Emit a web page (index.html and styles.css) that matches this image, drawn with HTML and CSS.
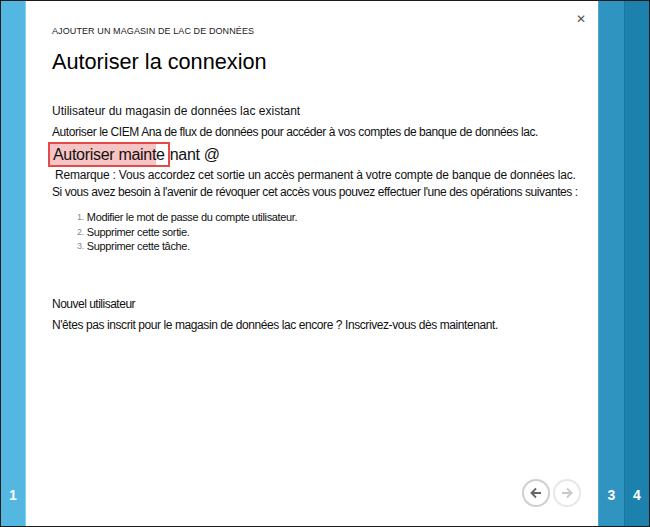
FILE: index.html
```html
<!DOCTYPE html>
<html lang="fr">
<head>
<meta charset="utf-8">
<title>Autoriser la connexion</title>
<link rel="stylesheet" href="styles.css">
</head>
<body>
<div class="frame">
  <div class="step step-1"><span class="step-num">1</span></div>
  <div class="main">
    <button class="close" aria-label="Fermer">&#x2715;</button>
    <div class="content">
      <div class="eyebrow">AJOUTER UN MAGASIN DE LAC DE DONNÉES</div>
      <h1 class="title">Autoriser la connexion</h1>
      <div class="section-head">Utilisateur du magasin de données lac existant</div>
      <p class="line tight">Autoriser le CIEM Ana de flux de données pour accéder à vos comptes de banque de données lac.</p>
      <div class="auth-row"><span class="auth-box"><span class="auth-fill"></span><span class="auth-text">Autoriser mainte</span></span><span class="auth-rest">nant @</span></div>
      <p class="line note">Remarque : Vous accordez cet sortie un accès permanent à votre compte de banque de données lac.</p>
      <p class="line tight after-note">Si vous avez besoin à l'avenir de révoquer cet accès vous pouvez effectuer l'une des opérations suivantes :</p>
      <ol class="ops">
        <li><span class="num">1.</span><span>Modifier le mot de passe du compte utilisateur.</span></li>
        <li><span class="num">2.</span><span>Supprimer cette sortie.</span></li>
        <li><span class="num">3.</span><span>Supprimer cette tâche.</span></li>
      </ol>
      <div class="section-head new">Nouvel utilisateur</div>
      <p class="line tight">N'êtes pas inscrit pour le magasin de données lac encore ? Inscrivez-vous dès maintenant.</p>
    </div>
    <div class="nav">
      <span class="circle back"><svg width="14" height="14" viewBox="0 0 14 14"><path d="M12 7H3M7 2.5L2.5 7 7 11.5" fill="none" stroke="#666" stroke-width="1.8"/></svg></span>
      <span class="circle fwd"><svg width="14" height="14" viewBox="0 0 14 14"><path d="M2 7h9M7 2.5L11.5 7 7 11.5" fill="none" stroke="#c8c8c8" stroke-width="1.8"/></svg></span>
    </div>
  </div>
  <div class="step step-3"><span class="step-num">3</span></div>
  <div class="step step-4"><span class="step-num">4</span></div>
</div>
</body>
</html>
```

FILE: styles.css
```css
html, body {
  margin: 0;
  padding: 0;
  background: #fff;
}
.frame {
  box-sizing: border-box;
  width: 650px;
  height: 527px;
  border: 1px solid #1b1b1b;
  display: flex;
  font-family: "Liberation Sans", Arial, sans-serif;
  color: #111;
}
.step {
  display: flex;
  align-items: flex-end;
  justify-content: center;
  padding-bottom: 23px;
  box-sizing: border-box;
}
.step-num {
  color: #fff;
  font-weight: bold;
  font-size: 14px;
  line-height: 16px;
}
.step-1 {
  width: 25px;
  background: #53b7e2;
  border-right: 1px solid #7fd2f2;
}
.step-3 {
  width: 26px;
  background: #3094c0;
  border-left: 1px solid #4ea9d2;
}
.step-4 {
  width: 25px;
  background: #1c82ad;
  border-left: 1px solid #1a78a0;
}
.main {
  flex: 1;
  display: flex;
  flex-direction: column;
  position: relative;
}
.close {
  position: absolute;
  top: 11px;
  right: 12px;
  border: 0;
  background: none;
  padding: 0;
  font-size: 12px;
  font-weight: bold;
  color: #555;
  font-family: "DejaVu Sans", sans-serif;
}
.content {
  flex: 1;
  padding: 25px 0 0 26px;
}
.eyebrow {
  font-size: 9px;
  line-height: 11px;
  color: #222;
  letter-spacing: 0.1px;
}
.title {
  margin: 12px 0 0;
  font-weight: normal;
  font-size: 21.7px;
  line-height: 26px;
  color: #000;
}
.section-head {
  margin-top: 29px;
  font-size: 12px;
  line-height: 15px;
}
.line {
  margin: 6px 0 0;
  font-size: 12px;
  line-height: 15px;
  letter-spacing: -0.2px;
}
.line.tight {
  letter-spacing: -0.42px;
}
.auth-row {
  margin-top: 2px;
  margin-left: -4px;
  display: flex;
  align-items: center;
  font-size: 16px;
  line-height: 19px;
  letter-spacing: -0.3px;
}
.auth-box {
  position: relative;
  border: 2px solid #e34a4a;
  padding: 1px 3px 1px 3px;
}
.auth-fill {
  position: absolute;
  left: 0;
  top: 0;
  bottom: 0;
  width: 106px;
  background: #f6c4c4;
}
.auth-text {
  position: relative;
}
.note {
  margin-top: 1px;
  margin-left: 3px;
}
.after-note {
  margin-top: 2px;
}
.ops {
  list-style: none;
  margin: 10px 0 0 25px;
  padding: 0;
  font-size: 11px;
  line-height: 14.5px;
  letter-spacing: -0.35px;
}
.ops li {
  display: flex;
  gap: 3px;
}
.ops .num {
  color: #888;
  font-size: 9px;
}
.section-head.new {
  margin-top: 43px;
  letter-spacing: -0.5px;
}
.nav {
  display: flex;
  justify-content: flex-end;
  gap: 3px;
  padding: 0 17px 19px 0;
}
.circle {
  width: 28px;
  height: 28px;
  box-sizing: border-box;
  border-radius: 50%;
  display: flex;
  align-items: center;
  justify-content: center;
}
.back {
  border: 2px solid #cfcfcf;
}
.fwd {
  border: 2px solid #e8e8e8;
}
```
